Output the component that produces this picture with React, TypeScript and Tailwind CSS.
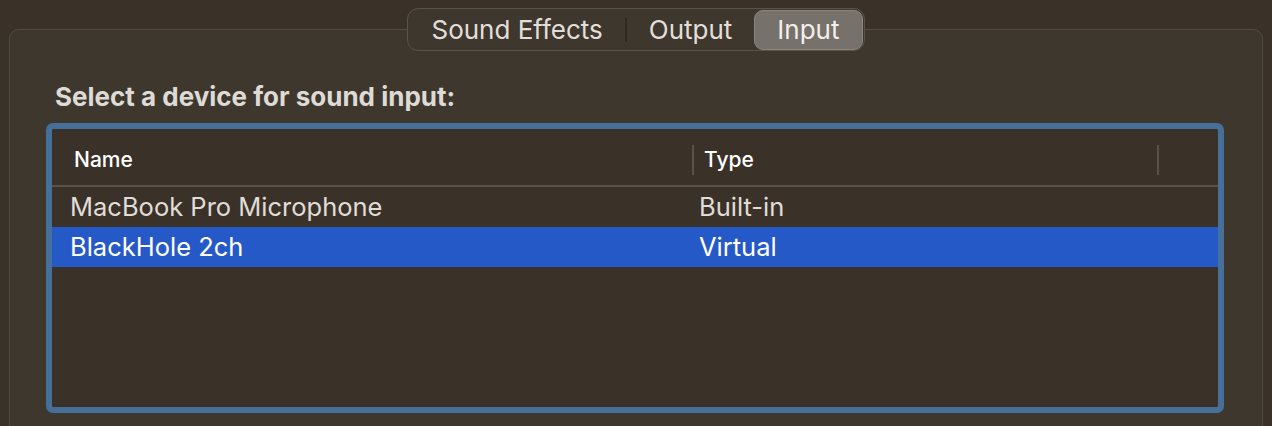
const rows = [
  { name: "MacBook Pro Microphone", type: "Built-in", selected: false },
  { name: "BlackHole 2ch", type: "Virtual", selected: true },
]

function Segmented() {
  const tabs = ["Sound Effects", "Output", "Input"]
  return (
    <div className="relative z-10 mx-auto flex h-[43px] items-center rounded-[11px] border border-[#5a5347] bg-[#3e372d] p-[1px] text-[26px]">
      {tabs.map((t, i) => {
        const active = t === "Input"
        return (
          <div key={t} className="flex h-full items-center">
            {i === 1 && <div className="h-[24px] w-[2px] bg-[#2f2921]" />}
            <div
              className={
                active
                  ? "flex h-[40px] items-center rounded-[9px] border border-[#8a857d] bg-[#76716a] px-[22px] text-[#f1efec]"
                  : i === 0
                    ? "flex h-[40px] items-center pl-[22px] pr-[22px] text-[#e2dfda]"
                    : "flex h-[40px] items-center px-[22px] text-[#e2dfda]"
              }
            >
              {t}
            </div>
          </div>
        )
      })}
    </div>
  )
}

export default function App() {
  return (
    <div
      className="h-[426px] w-full overflow-hidden bg-[#3a3229] px-[9px] pt-[8px] text-[25.5px]"
      style={{ fontFamily: "Inter, 'Noto Sans', sans-serif" }}
    >
      <div className="flex flex-col">
        <Segmented />
        <div className="-mt-[22px] h-[420px] rounded-[10px] border border-[#544c40] bg-[#3e372d] pl-[36px] pr-[38px] pt-[54px]">
          <div className="pl-[9px] text-[26px] font-bold leading-[26px] text-[#dedbd6]">
            Select a device for sound input:
          </div>
          <div className="mt-[13px] h-[290px] rounded-[7px] border-[6px] border-[#46709a] bg-[#3a3229]">
            <div className="flex h-[58px] items-center border-b-2 border-[#5a5246] pt-[6px] text-[21px] font-medium text-white">
              <div className="w-[640px] pl-[22px]">Name</div>
              <div className="flex h-[30px] w-[465px] items-center border-l-2 border-[#5a5246] pl-[10px]">Type</div>
              <div className="h-[30px] border-l-2 border-[#5a5246]" />
            </div>
            {rows.map((r) => (
              <div
                key={r.name}
                className={
                  r.selected
                    ? "flex h-[40px] items-center bg-[#2659c8] text-white"
                    : "flex h-[40px] items-center text-[#e0ddd8]"
                }
              >
                <div className="w-[647px] pl-[18px]">{r.name}</div>
                <div>{r.type}</div>
              </div>
            ))}
          </div>
        </div>
      </div>
    </div>
  )
}
